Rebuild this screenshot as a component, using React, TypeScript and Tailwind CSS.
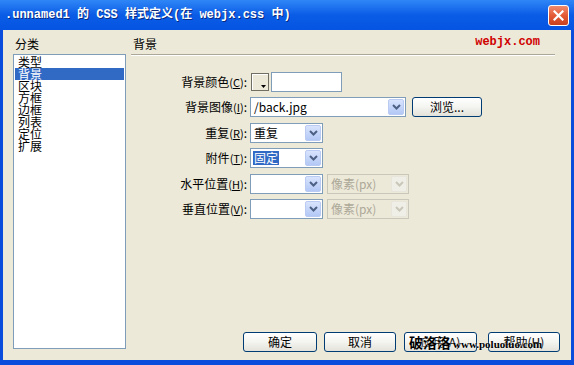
import React from 'react';

const cn = "font-['Noto_Sans_CJK_SC','Liberation_Sans',sans-serif]";

function Chevron({ disabled }: { disabled?: boolean }) {
  return (
    <svg width="9" height="6" viewBox="0 0 9 6">
      <path d="M1 1 L4.5 4.5 L8 1" fill="none" stroke={disabled ? '#C9C7BA' : '#4D6185'} strokeWidth="2" />
    </svg>
  );
}

function Select({ className, value, disabled, picked }: { className: string; value?: string; disabled?: boolean; picked?: boolean }) {
  return (
    <div
      className={[
        'flex h-[20px] border',
        disabled ? 'border-[#C9C7BA] bg-[#ECE9D8]' : 'border-[#7F9DB9] bg-white',
        className,
      ].join(' ')}
    >
      <div className="flex flex-1 items-center pl-[2px] overflow-hidden">
        {value && (
          <span
            className={[
              'text-[12px] leading-[14px] px-[1px] whitespace-nowrap',
              picked ? 'bg-[#316AC5] text-white' : disabled ? 'text-[#ACA899]' : 'text-black',
            ].join(' ')}
          >
            {value}
          </span>
        )}
      </div>
      <div
        className={[
          'm-[1px] w-[16px] rounded-[2px] border flex items-center justify-center',
          disabled
            ? 'border-[#E8E6DC] bg-[#F0EFE7]'
            : 'border-[#B9CAF3] bg-gradient-to-b from-[#D9E4FD] to-[#B3C8F5]',
        ].join(' ')}
      >
        <Chevron disabled={disabled} />
      </div>
    </div>
  );
}

function XPButton({ className, children }: { className: string; children: React.ReactNode }) {
  return (
    <div
      className={[
        'h-[20px] rounded-[3px] border border-[#003C74] bg-gradient-to-b from-[#FFFFFF] via-[#F4F4F0] to-[#E3E2DA] flex items-center justify-center text-[12px] leading-[14px] text-black',
        className,
      ].join(' ')}
    >
      {children}
    </div>
  );
}

function Label({ text, k }: { text: string; k: string }) {
  return (
    <div className="w-[116px] text-right text-[12px] leading-[14px] text-black whitespace-nowrap">
      {text}
      <span className="text-[11px]">(<span className="underline">{k}</span>)</span>:
    </div>
  );
}

const categories = ['类型', '背景', '区块', '方框', '边框', '列表', '定位', '扩展'];

export default function App() {
  return (
    <div className={`relative w-[574px] h-[365px] flex flex-col bg-[#0A4CDB] overflow-hidden select-none ${cn}`}>
      {/* Title bar */}
      <div className="h-[30px] flex items-center justify-between pl-[5px] pr-[5px] bg-gradient-to-b from-[#2F86F6] via-[#0A5CE6] to-[#0654E2]">
        <div className="font-['Liberation_Mono','Noto_Sans_CJK_SC',monospace] font-bold text-[12px] leading-[14px] text-white whitespace-pre [text-shadow:1px_1px_0_#0A2A80]">
          .unnamed1 的 CSS 样式定义(在 webjx.css 中)
        </div>
        <div className="w-[21px] h-[21px] rounded-[3px] border border-white bg-gradient-to-b from-[#F08A6C] via-[#E35A35] to-[#C9401E] flex items-center justify-center">
          <svg width="11" height="11" viewBox="0 0 11 11">
            <path d="M1.5 1.5 L9.5 9.5 M9.5 1.5 L1.5 9.5" stroke="white" strokeWidth="2.2" strokeLinecap="square" />
          </svg>
        </div>
      </div>

      {/* Body */}
      <div className="flex-1 flex px-[3px] pb-[5px]">
        <div className="flex-1 flex bg-[#ECE9D8] pl-[10px] pb-[8px]">
          {/* Category list */}
          <div className="w-[113px] flex flex-col">
            <div className="h-[24px] pt-[8px] pl-[2px] text-[12px] leading-[12px] text-black">分类</div>
            <div className="flex-1 mb-[3px] border border-[#7F9DB9] bg-white pt-[1px] px-[1px]">
              {categories.map(c => (
                <div
                  key={c}
                  className={[
                    'h-[12px] pl-[3px] text-[12px] leading-[12px]',
                    c === '背景' ? 'bg-[#316AC5] text-white' : 'text-black',
                  ].join(' ')}
                >
                  {c}
                </div>
              ))}
            </div>
          </div>

          {/* Panel */}
          <div className="flex-1 flex flex-col ml-[5px] pr-[11px]">
            <div className="h-[25px] mr-[5px] flex items-start justify-between border-b border-[#ACA899] shadow-[0_1px_0_#FFFFFF]">
              <div className="pt-[8px] pl-[2px] text-[12px] leading-[12px] text-black">背景</div>
              <div className="pt-[6px] pr-[15px] font-['Liberation_Mono',monospace] font-bold text-[12px] leading-[12px] text-[#D00000]">
                webjx.com
              </div>
            </div>

            <div className="mt-[17px] flex flex-col">
              <div className="h-[20px] flex items-center">
                <Label text="背景颜色" k="C" />
                <div className="ml-[4px] relative w-[18px] h-[18px] border border-[#716F64] bg-[#ECE9D8] shadow-[inset_1px_1px_0_#FFFFFF]">
                  <svg className="absolute right-[2px] bottom-[2px]" width="5" height="3" viewBox="0 0 5 3">
                    <path d="M0 0 H5 L2.5 3 Z" fill="#000" />
                  </svg>
                </div>
                <div className="ml-[2px] w-[71px] h-[20px] border border-[#7F9DB9] bg-white" />
              </div>

              <div className="mt-[5px] h-[20px] flex items-center">
                <Label text="背景图像" k="I" />
                <Select className="ml-[3px] w-[156px]" value="/back.jpg" />
                <XPButton className="ml-[6px] w-[70px]">浏览...</XPButton>
              </div>

              <div className="mt-[6px] h-[20px] flex items-center">
                <Label text="重复" k="R" />
                <Select className="ml-[3px] w-[73px]" value="重复" />
              </div>

              <div className="mt-[5px] h-[20px] flex items-center">
                <Label text="附件" k="T" />
                <Select className="ml-[3px] w-[73px]" value="固定" picked />
              </div>

              <div className="mt-[6px] h-[20px] flex items-center">
                <Label text="水平位置" k="H" />
                <Select className="ml-[3px] w-[73px]" />
                <Select className="ml-[4px] w-[82px]" value="像素(px)" disabled />
              </div>

              <div className="mt-[5px] h-[20px] flex items-center">
                <Label text="垂直位置" k="V" />
                <Select className="ml-[3px] w-[73px]" />
                <Select className="ml-[4px] w-[82px]" value="像素(px)" disabled />
              </div>
            </div>

            <div className="mt-auto flex justify-end">
              <XPButton className="w-[74px]">确定</XPButton>
              <XPButton className="ml-[7px] w-[72px]">取消</XPButton>
              <XPButton className="ml-[8px] w-[73px]">应用(A)</XPButton>
              <XPButton className="ml-[11px] w-[72px]">帮助(H)</XPButton>
            </div>
          </div>
        </div>
      </div>

      {/* Watermark */}
      <div className="absolute left-[409px] top-[334px] flex items-end gap-[2px] pointer-events-none">
        <span className="text-[14px] leading-[16px] font-bold text-black [text-shadow:0_0_2px_#FFFFFF]">破洛洛</span>
        <span className="font-['Liberation_Serif',serif] font-bold text-[11px] leading-[12px] text-black [text-shadow:0_0_2px_#FFFFFF]">
          www.poluoluo.com
        </span>
      </div>
    </div>
  );
}
